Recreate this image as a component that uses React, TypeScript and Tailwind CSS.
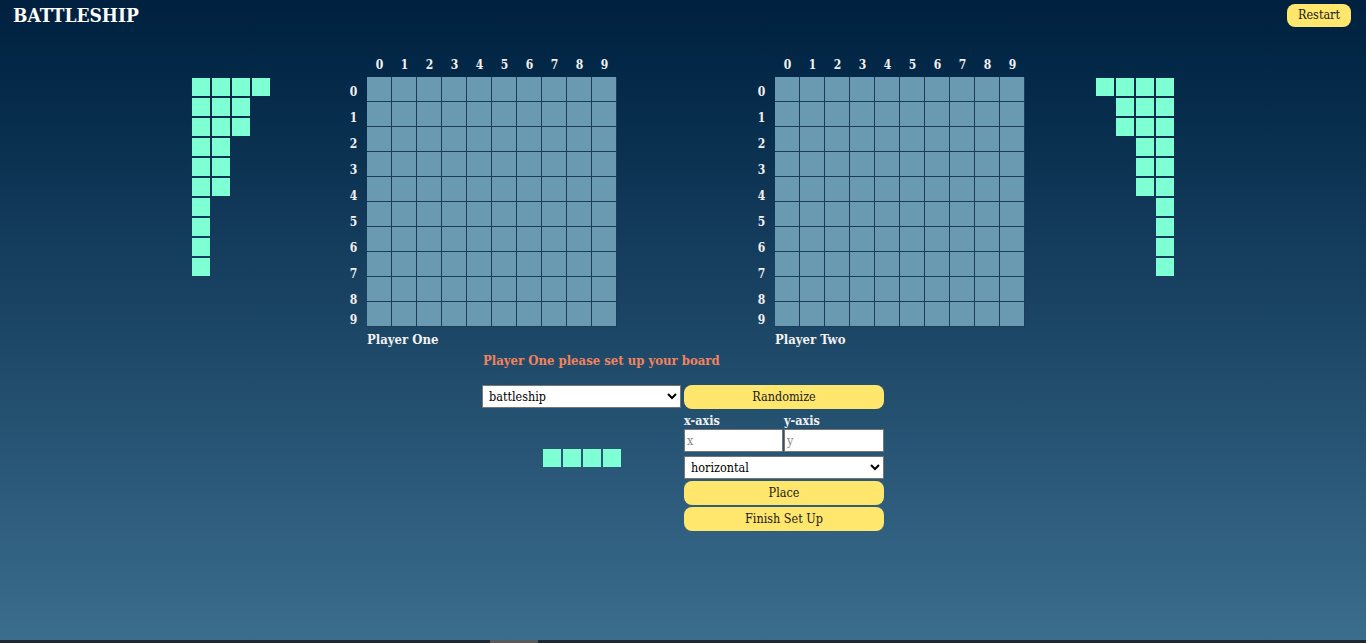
import React from 'react'

const FLEET = [4, 3, 3, 2, 2, 2, 1, 1, 1, 1]
const DIGITS = [0, 1, 2, 3, 4, 5, 6, 7, 8, 9]

function Fleet({ align }: { align: 'left' | 'right' }) {
  return (
    <div className={`w-[78px] mt-[27px] flex flex-col gap-[2px] ${align === 'left' ? 'items-start' : 'items-end'}`}>
      {FLEET.map((len, i) => (
        <div key={i} className="flex gap-[2px]">
          {Array.from({ length: len }).map((_, j) => (
            <div key={j} className="w-[18px] h-[18px] bg-[#7fffd4]" />
          ))}
        </div>
      ))}
    </div>
  )
}

function Board({ name }: { name: string }) {
  return (
    <div className="flex flex-col">
      {/* column labels */}
      <div className="flex">
        <div className="w-[20px]" />
        {DIGITS.map((d) => (
          <div key={d} className="w-[25px] h-[26px] pt-[1px] flex items-center justify-center text-[12px] font-bold text-[#f2f2f2]">
            {d}
          </div>
        ))}
      </div>
      <div className="flex">
        {/* row labels */}
        <div className="w-[20px] pr-[7px] pt-[2px] flex flex-col text-[12px] font-bold text-[#f2f2f2]">
          {DIGITS.map((d) => (
            <div key={d} className={`${d === 9 ? 'h-[14px]' : 'h-[26px]'} flex items-center justify-center`}>
              {d}
            </div>
          ))}
        </div>
        <div className="grid grid-cols-10 w-[250px] h-[250px]">
          {Array.from({ length: 100 }).map((_, i) => (
            <div key={i} className="w-[25px] h-[25px] bg-[#6a9ab1] border-r border-b border-[#1b3c5b]" />
          ))}
        </div>
      </div>
      <div className="mt-[4px] pl-[20px] h-[18px] leading-[18px] text-[13px] font-bold text-[#f2f2f2]">{name}</div>
    </div>
  )
}

export default function App() {
  return (
    <div className="w-[1366px] h-[643px] flex flex-col font-['DejaVu_Serif_Condensed','DejaVu_Serif',serif] [font-stretch:condensed] overflow-hidden">
      <div className="h-[640px] bg-linear-to-b from-[#00203f] to-[#3b6d8d] flex flex-col">
        {/* Header */}
        <div className="h-[31px] flex items-center justify-between pl-[13px] pr-[15px]">
          <h1 className="text-[19px] font-bold text-white">BATTLESHIP</h1>
          <button className="w-[64px] h-[23px] rounded-lg bg-[#ffe66d] text-[12.5px] text-[#1a1a1a]">Restart</button>
        </div>

        {/* Boards */}
        <div className="mt-[20px] flex justify-center">
          <Fleet align="left" />
          <div className="ml-[77px]">
            <Board name="Player One" />
          </div>
          <div className="ml-[138px]">
            <Board name="Player Two" />
          </div>
          <div className="ml-[71px]">
            <Fleet align="right" />
          </div>
        </div>

        {/* Message */}
        <div className="w-[402px] mx-auto mt-[3px] pl-[1px] h-[18px] leading-[18px] text-[13px] font-bold text-[#f3835f]">
          Player One please set up your board
        </div>

        {/* Controls */}
        <div className="w-[402px] mx-auto mt-[15px] flex gap-[2px] text-[12.5px]">
          <div className="w-[200px] flex flex-col">
            <select className="w-[199px] h-[23px] bg-white border border-[#767676] text-black px-[2px]" defaultValue="battleship">
              <option value="battleship">battleship</option>
              <option value="cruiser">cruiser</option>
              <option value="destroyer">destroyer</option>
              <option value="submarine">submarine</option>
            </select>
            <div className="mt-[41px] flex justify-center gap-[2px]">
              {[0, 1, 2, 3].map((i) => (
                <div key={i} className="w-[18px] h-[18px] bg-[#7fffd4]" />
              ))}
            </div>
          </div>
          <div className="w-[200px] flex flex-col">
            <button className="h-[24px] pt-[1px] rounded-lg bg-[#ffe66d] text-[#1a1a1a]">Randomize</button>
            <div className="mt-[4px] grid grid-cols-2 h-[16px] leading-[16px] font-bold text-[#f2f2f2]">
              <span>x-axis</span>
              <span>y-axis</span>
            </div>
            <div className="grid grid-cols-2 h-[23px]">
              <input placeholder="x" className="w-[99px] h-[23px] bg-white border border-[#767676] px-[2px] text-black placeholder:text-[#8a8a8a]" />
              <input placeholder="y" className="w-[100px] h-[23px] bg-white border border-[#767676] px-[2px] text-black placeholder:text-[#8a8a8a]" />
            </div>
            <select className="mt-[4px] w-[200px] h-[23px] bg-white border border-[#767676] text-black px-[2px]" defaultValue="horizontal">
              <option value="horizontal">horizontal</option>
              <option value="vertical">vertical</option>
            </select>
            <button className="mt-[2px] h-[24px] pt-[1px] rounded-lg bg-[#ffe66d] text-[#1a1a1a]">Place</button>
            <button className="mt-[2px] h-[24px] pt-[1px] rounded-lg bg-[#ffe66d] text-[#1a1a1a]">Finish Set Up</button>
          </div>
        </div>
      </div>
      {/* bottom scrollbar strip */}
      <div className="h-[3px] bg-[#1f2831] flex">
        <div className="ml-[490px] w-[48px] h-[3px] bg-[#5a5a5a]" />
      </div>
    </div>
  )
}
